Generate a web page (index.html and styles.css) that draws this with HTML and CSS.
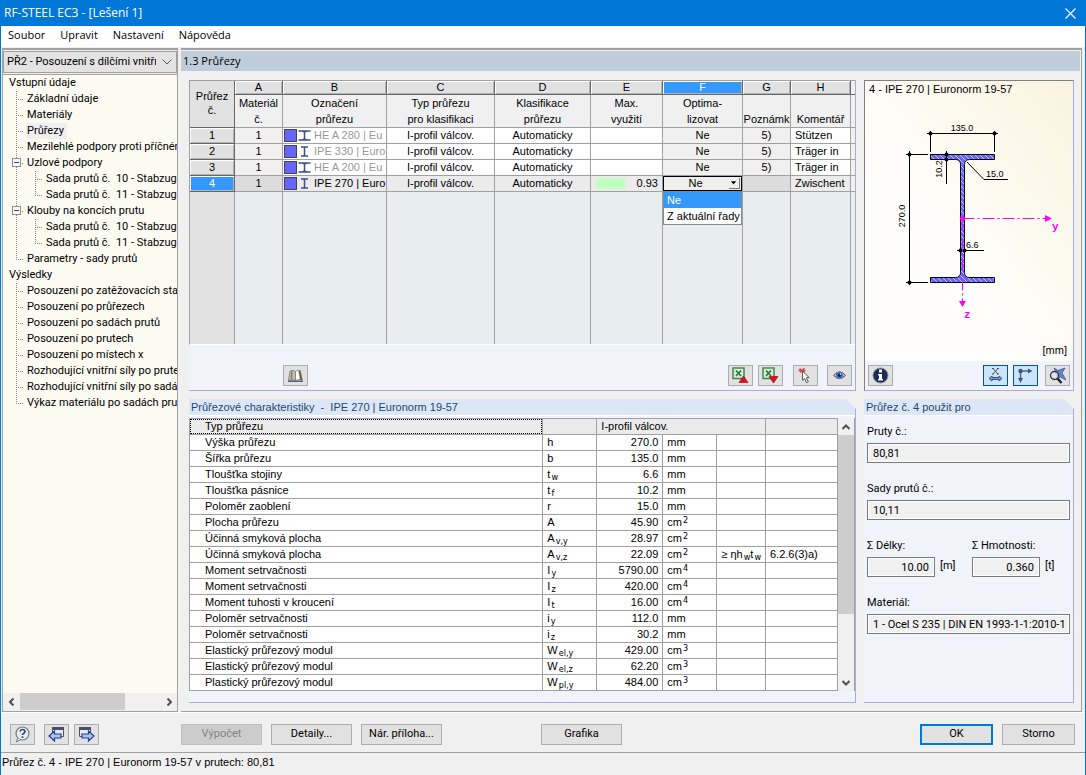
FILE: index.html
```html
<!DOCTYPE html>
<html lang="cs">
<head>
<meta charset="utf-8">
<title>RF-STEEL EC3 - [Lešení 1]</title>
<link rel="stylesheet" href="styles.css">
</head>
<body>
<div class="window">
  <header class="titlebar">
    <h1>RF-STEEL EC3 - [Lešení 1]</h1>
    <button class="close" aria-label="Zavřít"><svg width="11" height="11" viewBox="0 0 11 11"><path d="M.5.5l10 10M10.500.500l-10 10" stroke="#fff" fill="none" stroke-width="1.200"/></svg></button>
  </header>
  <nav class="menu">
    <button>Soubor</button><button>Upravit</button><button>Nastavení</button><button>Nápověda</button>
  </nav>

  <div class="main">
    <aside class="sidebar">
      <select class="case" aria-label="Případ"><option>PŘ2 - Posouzení s dílčími vnitřními silami</option></select>
      <div class="treebox">
        <ul class="tree">
          <li>Vstupní údaje
            <ul>
              <li>Základní údaje</li>
              <li>Materiály</li>
              <li><span class="current">Průřezy</span></li>
              <li>Mezilehlé podpory proti příčnému</li>
              <li><button class="expander" aria-label="Sbalit"></button>Uzlové podpory
                <ul><li>Sada prutů č.&nbsp; 10 - Stabzug</li><li>Sada prutů č.&nbsp; 11 - Stabzug</li></ul></li>
              <li><button class="expander" aria-label="Sbalit"></button>Klouby na koncích prutu
                <ul><li>Sada prutů č.&nbsp; 10 - Stabzug</li><li>Sada prutů č.&nbsp; 11 - Stabzug</li></ul></li>
              <li>Parametry - sady prutů</li>
            </ul></li>
          <li>Výsledky
            <ul>
              <li>Posouzení po zatěžovacích stavech</li>
              <li>Posouzení po průřezech</li>
              <li>Posouzení po sadách prutů</li>
              <li>Posouzení po prutech</li>
              <li>Posouzení po místech x</li>
              <li>Rozhodující vnitřní síly po prutech</li>
              <li>Rozhodující vnitřní síly po sadách</li>
              <li>Výkaz materiálu po sadách prutů</li>
            </ul></li>
        </ul>
        <div class="hscroll">
          <button aria-label="Vlevo"><svg width="8" height="8" viewBox="0 0 8 8"><path d="M5.500.500L2 4l3.500 3.500"/></svg></button>
          <div class="track"><div class="thumb"></div></div>
          <button aria-label="Vpravo"><svg width="8" height="8" viewBox="0 0 8 8"><path d="M2.500.500L6 4 2.500 7.500"/></svg></button>
        </div>
      </div>
    </aside>

    <main class="content">
      <h2 class="page-title">1.3 Průřezy</h2>
      <div class="panels">
        <section class="panel sections">
          <table class="grid">
            <colgroup><col class="c0"><col class="c1"><col class="c2"><col class="c3"><col class="c4"><col class="c5"><col class="c6"><col class="c1"><col class="c8"><col></colgroup>
            <thead>
              <tr class="letters"><th class="corner" rowspan="2">Průřez<br>č.</th><th>A</th><th>B</th><th>C</th><th>D</th><th>E</th><th class="on">F</th><th>G</th><th>H</th><th class="end"></th></tr>
              <tr class="names"><th>Materiál<br>č.</th><th>Označení<br>průřezu</th><th>Typ průřezu<br>pro klasifikaci</th><th>Klasifikace<br>průřezu</th><th>Max.<br>využití</th><th>Optima-<br>lizovat</th><th><br>Poznámk</th><th><br>Komentář</th><th class="end"></th></tr>
            </thead>
            <tbody>
              <tr><th>1</th><td class="ro">1</td><td class="sec dim"><span><i></i><svg width="13" height="11" viewBox="0 0 13 11"><path d="M.5 1h12M.5 10h12M4.500 1.500h4M4.500 9.500h4M6.500 1v9"/></svg>HE A 280 | Eu</span></td><td>I-profil válcov.</td><td>Automaticky</td><td></td><td class="ro">Ne</td><td class="ro">5)</td><td class="left">Stützen</td><td class="end"></td></tr>
              <tr><th>2</th><td class="ro">1</td><td class="sec dim"><span><i></i><svg width="13" height="11" viewBox="0 0 13 11"><path d="M3 1h7M3 10h7M6.500 1v9"/></svg>IPE 330 | Euro</span></td><td>I-profil válcov.</td><td>Automaticky</td><td></td><td class="ro">Ne</td><td class="ro">5)</td><td class="left">Träger in</td><td class="end"></td></tr>
              <tr><th>3</th><td class="ro">1</td><td class="sec dim"><span><i></i><svg width="13" height="11" viewBox="0 0 13 11"><path d="M.5 1h12M.5 10h12M4.500 1.500h4M4.500 9.500h4M6.500 1v9"/></svg>HE A 200 | Eu</span></td><td>I-profil válcov.</td><td>Automaticky</td><td></td><td class="ro">Ne</td><td class="ro">5)</td><td class="left">Träger in</td><td class="end"></td></tr>
              <tr class="sel"><th>4</th><td class="ro">1</td><td class="sec"><span><i></i><svg width="13" height="11" viewBox="0 0 13 11"><path d="M3 1h7M3 10h7M6.500 1v9"/></svg>IPE 270 | Euro</span></td><td>I-profil válcov.</td><td>Automaticky</td>
                <td><span class="usage"><i></i>0.93</span></td>
                <td class="edit"><div class="combo"><select aria-label="Optimalizovat"><option>Ne</option><option>Z aktuální řady</option></select><svg class="drop" width="11" height="11" viewBox="0 0 11 11"><path d="M2 3.500h6L5 7z"/></svg>
                  <ul class="options" role="listbox"><li role="option" aria-selected="true">Ne</li><li role="option">Z aktuální řady</li></ul></div></td>
                <td class="ro"></td><td class="left">Zwischent</td><td class="end"></td></tr>
              <tr class="rest"><th></th><td></td><td></td><td></td><td></td><td></td><td></td><td></td><td></td><td class="end"></td></tr>
            </tbody>
          </table>
          <div class="toolbar grid-tools">
            <button class="icon" aria-label="Knihovna"><svg width="17" height="14" viewBox="0 0 17 14"><path d="M3 2q3-1.500 5.500.5v9Q5 10 1.500 11.500z" fill="#c9c2b2" stroke="#777" stroke-width=".8"/><path d="M8.500 2.500q2-2 4.500-1l2 9.500q-3.500-1-6.500.500z" fill="#fff" stroke="#777" stroke-width=".8"/><path d="M4 2.200l1.500-.4v9H3.500z" fill="#8a8170"/><path d="M11.500 1.500l2 .3 2 9.200h-2.500z" fill="#6b614f"/><path d="M1 11.500h15v1.500H1z" fill="#556080"/></svg></button>
            <button class="icon push" aria-label="Export do Excelu"><svg width="17" height="17" viewBox="0 0 17 17"><rect x="1" y="1" width="11" height="10.500" fill="#dcecdc" stroke="#3f8a4b" stroke-width="1.500"/><path d="M4 3.500l5 5.500M9 3.500L4 9" stroke="#2f7a3d" stroke-width="1.800"/><path d="M11.500 9l4.500 6.500H7z" fill="#e01020" stroke="#900" stroke-width=".6"/></svg></button>
            <button class="icon" aria-label="Import z Excelu"><svg width="17" height="17" viewBox="0 0 17 17"><rect x="1" y="1" width="11" height="10.500" fill="#dcecdc" stroke="#3f8a4b" stroke-width="1.500"/><path d="M4 3.500l5 5.500M9 3.500L4 9" stroke="#2f7a3d" stroke-width="1.800"/><path d="M11.500 16l4.500-6.500H7z" fill="#e01020" stroke="#900" stroke-width=".6"/></svg></button>
            <button class="icon gap-l" aria-label="Vybrat"><svg width="17" height="17" viewBox="0 0 17 17"><path d="M2.500 1.500l5 4M7.500 1L3 5.500M1.500 3.500h7" stroke="#d84050" stroke-width="1.300"/><path d="M5.500 4l6.500 6.500-2.700.300 2 4-1.800.900-1.900-4.100-2 1.800z" fill="#fff" stroke="#555"/></svg></button>
            <button class="icon gap-m" aria-label="Zobrazit"><svg width="15" height="11" viewBox="0 0 15 11"><path d="M1.500 5.500Q7.500-1.500 13.500 5.500 7.500 11.500 1.500 5.500z" fill="#dde6f5" stroke="#444"/><circle cx="7.500" cy="5.300" r="3.700" fill="#4d74c9"/><circle cx="7.500" cy="5.300" r="1.700" fill="#111a40"/><circle cx="8.500" cy="4.300" r=".7" fill="#fff"/></svg></button>
          </div>
        </section>

        <section class="panel preview">
          <svg class="drawing" viewBox="865 81 208 280" role="img" aria-label="IPE 270">
            <defs>
              <linearGradient id="paper" x1="0" y1="1" x2="1" y2="0"><stop offset=".35" stop-color="#fffefc"/><stop offset="1" stop-color="#f9f4df"/></linearGradient>
              <pattern id="hatch" width="5" height="5" patternUnits="userSpaceOnUse"><rect width="5" height="5" fill="#6666ff"/><path d="M-1-1l7 7M-1 4l2 2M4-1l2 2" stroke="#ececff" stroke-width=".7"/></pattern>
            </defs>
            <rect x="865" y="81" width="208" height="280" fill="url(#paper)"/>
            <text x="869" y="93" class="cap">4 - IPE 270 | Euronorm 19-57</text>
            <path d="M930.500 154.500h64v5h-25q-5 0-5 5v108q0 5 5 5h25v5h-64v-5h25q5 0 5-5v-108q0-5-5-5h-25z" fill="url(#hatch)" stroke="#000"/>
            <g stroke="#000" fill="none">
              <path d="M927 133.500h71M930.500 131v21M994.500 131v21M909.500 151v134M906 154.500h22M906 282.500h22M946.500 151v33M957 250.500h27M967 162l17 17.500h24"/>
            </g>
            <g fill="#000"><circle cx="930.500" cy="133.500" r="2"/><circle cx="994.500" cy="133.500" r="2"/><circle cx="909.500" cy="154.500" r="2"/><circle cx="909.500" cy="282.500" r="2"/><circle cx="946.500" cy="154.500" r="2"/><circle cx="946.500" cy="159.500" r="2"/><circle cx="960.500" cy="250.500" r="2"/><circle cx="964.500" cy="250.500" r="2"/></g>
            <g class="dim-text">
              <text x="962" y="131" text-anchor="middle">135.0</text>
              <text x="986" y="177">15.0</text>
              <text x="966" y="248">6.6</text>
              <text transform="translate(905 216) rotate(-90)" text-anchor="middle">270.0</text>
              <text transform="translate(942 169) rotate(-90)" text-anchor="middle">10.2</text>
            </g>
            <g stroke="#f0f" fill="none" stroke-dasharray="12 3 2 3"><path d="M962.500 218.500h83M962.500 218.500v84"/></g>
            <path d="M1045 215l7 3.500-7 3.500zM959 301h7l-3.500 6z" fill="#f0f"/><circle cx="962.500" cy="218.500" r="2.500" fill="#f0f"/>
            <g class="axis"><text x="1052" y="230">y</text><text x="964" y="318">z</text></g>
            <text x="1067" y="354" text-anchor="end" class="cap">[mm]</text>
          </svg>
          <div class="toolbar">
            <button class="icon" aria-label="Informace"><svg width="17" height="17" viewBox="0 0 17 17"><circle cx="8.500" cy="8.500" r="7.500" fill="#1d2a52" stroke="#8890a8"/><path d="M7 2.500h3v3H7zM6 7h4v5h1v1.500H6V12h1V8.500H6z" fill="#fff"/></svg></button>
            <button class="icon on push" aria-label="Kóty"><svg width="17" height="17" viewBox="0 0 17 17"><path d="M6 1.500l5 5.500M11 1.500L6 7M5 1.500h2M10 1.500h2M5 7h2M10 7h2" stroke="#444" stroke-width=".9" fill="none"/><path d="M2 11.500l3-2.500v1.500h7V9l3 2.500-3 2.500v-1.500H5V14z" fill="#7d9bd0" stroke="#2a4478" stroke-width=".9"/></svg></button>
            <button class="icon on" aria-label="Osy"><svg width="17" height="17" viewBox="0 0 17 17"><path d="M2 4h10M3.500 2v10" stroke="#4a6498" stroke-width="1.500"/><path d="M11 1.500L15.500 4 11 6.500zM1 11h5l-2.500 5z" fill="#3a5488"/><circle cx="3.500" cy="4" r="2.200" fill="#3a5488"/></svg></button>
            <button class="icon gap-s" aria-label="Zobrazit vše"><svg width="17" height="17" viewBox="0 0 17 17"><path d="M5 1l4 2.500L16 1l-3 5 4 7-6-3-4 3 1-6z" fill="#5f86cf" stroke="#2b4a90" stroke-width=".7"/><circle cx="5.500" cy="8.500" r="4" fill="#dfe6f0" fill-opacity=".8" stroke="#333" stroke-width="1.300"/><path d="M8.500 11.500l4 4.500" stroke="#222" stroke-width="2.500"/></svg></button>
          </div>
        </section>

        <section class="panel props">
          <h3>Průřezové charakteristiky &nbsp;-&nbsp; IPE 270 | Euronorm 19-57</h3>
          <div class="props-body">
            <table class="values">
              <colgroup><col><col class="v1"><col class="v2"><col class="v3"><col class="v4"><col class="v5"></colgroup>
              <tbody>
                <tr class="head"><td><div class="focus">Typ průřezu</div></td><td></td><td colspan="3" class="type">I-profil válcov.</td><td></td></tr>
                <tr><td>Výška průřezu</td><td>h</td><td>270.0</td><td>mm</td><td></td><td></td></tr>
                <tr><td>Šířka průřezu</td><td>b</td><td>135.0</td><td>mm</td><td></td><td></td></tr>
                <tr><td>Tloušťka stojiny</td><td>t<sub>w</sub></td><td>6.6</td><td>mm</td><td></td><td></td></tr>
                <tr><td>Tloušťka pásnice</td><td>t<sub>f</sub></td><td>10.2</td><td>mm</td><td></td><td></td></tr>
                <tr><td>Poloměr zaoblení</td><td>r</td><td>15.0</td><td>mm</td><td></td><td></td></tr>
                <tr><td>Plocha průřezu</td><td>A</td><td>45.90</td><td>cm<sup>2</sup></td><td></td><td></td></tr>
                <tr><td>Účinná smyková plocha</td><td>A<sub>v,y</sub></td><td>28.97</td><td>cm<sup>2</sup></td><td></td><td></td></tr>
                <tr><td>Účinná smyková plocha</td><td>A<sub>v,z</sub></td><td>22.09</td><td>cm<sup>2</sup></td><td>≥ ηh<sub>w</sub>t<sub>w</sub></td><td>6.2.6(3)a)</td></tr>
                <tr><td>Moment setrvačnosti</td><td>I<sub>y</sub></td><td>5790.00</td><td>cm<sup>4</sup></td><td></td><td></td></tr>
                <tr><td>Moment setrvačnosti</td><td>I<sub>z</sub></td><td>420.00</td><td>cm<sup>4</sup></td><td></td><td></td></tr>
                <tr><td>Moment tuhosti v kroucení</td><td>I<sub>t</sub></td><td>16.00</td><td>cm<sup>4</sup></td><td></td><td></td></tr>
                <tr><td>Poloměr setrvačnosti</td><td>i<sub>y</sub></td><td>112.0</td><td>mm</td><td></td><td></td></tr>
                <tr><td>Poloměr setrvačnosti</td><td>i<sub>z</sub></td><td>30.2</td><td>mm</td><td></td><td></td></tr>
                <tr><td>Elastický průřezový modul</td><td>W<sub>el,y</sub></td><td>429.00</td><td>cm<sup>3</sup></td><td></td><td></td></tr>
                <tr><td>Elastický průřezový modul</td><td>W<sub>el,z</sub></td><td>62.20</td><td>cm<sup>3</sup></td><td></td><td></td></tr>
                <tr><td>Plastický průřezový modul</td><td>W<sub>pl,y</sub></td><td>484.00</td><td>cm<sup>3</sup></td><td></td><td></td></tr>
              </tbody>
            </table>
            <div class="vscroll">
              <button aria-label="Nahoru"><svg width="8" height="8" viewBox="0 0 8 8"><path d="M.5 6L4 2.500 7.500 6"/></svg></button>
              <div class="track"><div class="thumb"></div></div>
              <button aria-label="Dolů"><svg width="8" height="8" viewBox="0 0 8 8"><path d="M.5 2L4 5.500 7.500 2"/></svg></button>
            </div>
          </div>
        </section>

        <section class="panel usedfor">
          <h3>Průřez č. 4 použit pro</h3>
          <form class="fields">
            <div class="field wide"><label for="pruty">Pruty č.:</label><input id="pruty" readonly value="80,81"></div>
            <div class="field wide"><label for="sady">Sady prutů č.:</label><input id="sady" readonly value="10,11"></div>
            <div class="field num"><label for="delky">Σ Délky:</label><div><input id="delky" readonly value="10.00"><span>[m]</span></div></div>
            <div class="field num"><label for="hmot">Σ Hmotnosti:</label><div><input id="hmot" readonly value="0.360"><span>[t]</span></div></div>
            <div class="field wide"><label for="mat">Materiál:</label><input id="mat" readonly value="1 - Ocel S 235 | DIN EN 1993-1-1:2010-12"></div>
          </form>
        </section>
      </div>
    </main>
  </div>

  <footer class="actions">
    <button class="icon" aria-label="Nápověda"><svg width="17" height="17" viewBox="0 0 17 17"><circle cx="8.500" cy="7.500" r="6.500" fill="#e6ebf5" stroke="#777" stroke-width="1.200"/><path d="M4 12l-2 4 5-2.500" fill="#e6ebf5" stroke="#777"/><path d="M6 5.500q.500-2 2.500-2t2.500 1.800q0 1.400-1.500 2.200-1 .500-1 1.500M8.500 10.300v1.700" stroke="#33497f" stroke-width="1.700" fill="none"/></svg></button>
    <button class="icon gap-m" aria-label="Předchozí"><svg width="17" height="17" viewBox="0 0 17 17"><path d="M4.500 1.500h11v9h-11z" fill="#e8e8ee" stroke="#555"/><path d="M4 1h12v3H4z" fill="#44506e"/><path d="M1 10l5.500-5v3H13v4H6.500v3z" fill="#a9c4f0" stroke="#1d3f94" stroke-width="1.200"/></svg></button>
    <button class="icon" aria-label="Další"><svg width="17" height="17" viewBox="0 0 17 17"><path d="M1.500 1.500h11v9h-11z" fill="#e8e8ee" stroke="#555"/><path d="M1 1h12v3H1z" fill="#44506e"/><path d="M16 10l-5.500-5v3H4v4h6.500v3z" fill="#a9c4f0" stroke="#1d3f94" stroke-width="1.200"/></svg></button>
    <div class="group calc"><button class="btn" disabled>Výpočet</button><button class="btn">Detaily...</button><button class="btn">Nár. příloha...</button></div>
    <button class="btn graphics">Grafika</button>
    <div class="group confirm"><button class="btn primary">OK</button><button class="btn">Storno</button></div>
  </footer>
  <div class="status">Průřez č. 4 - IPE 270 | Euronorm 19-57 v prutech: 80,81</div>
</div>
</body>
</html>
```
FILE: styles.css
```css
:root {
  --ui: Roboto, "Noto Sans", sans-serif;
  --system: "Open Sans", "Noto Sans", sans-serif;
  --grid: "Liberation Sans", Arial, sans-serif;
  --line: #a0a0a0;
  --panel: #f0f4fa;
  --panel-line: #a8a8ea;
}
* { box-sizing: border-box; }
body { margin: 0; background: #f0f0f0; color: #000; font: 11px/16px var(--ui); }
button, input, select { font: inherit; color: inherit; margin: 0; padding: 0; border: 0; border-radius: 0; }
ul { list-style: none; margin: 0; padding: 0; }
h1, h2, h3 { margin: 0; font-weight: normal; }
svg { display: block; flex: none; }
button { display: flex; align-items: center; justify-content: center; }

.window { display: flex; flex-direction: column; min-height: 100vh; border: 1px solid #0078d7; border-top: 0; }
.titlebar { display: flex; align-items: center; justify-content: space-between; height: 26px; padding: 0 9px 0 3px; background: #0078d7; color: #fff; }
.titlebar h1 { font: 12px/26px var(--system); }
.close { background: none; }
.menu { display: flex; gap: 15px; height: 21px; padding: 0 7px; background: #fff; font: 11px/18px var(--system); }
.menu button { height: 18px; background: none; }

.main { display: flex; flex: 1; gap: 3px; padding-top: 1px; }
.sidebar { display: flex; flex-direction: column; flex: none; width: 176px; margin-left: 1px; border: 1px solid var(--line); border-top-width: 2px; }
.case { appearance: none; height: 22px; margin: 1px 0 1px; padding: 0 20px 0 3px; border: 1px solid var(--line); background: #e3e3e3 url("data:image/svg+xml,%3Csvg xmlns='http://www.w3.org/2000/svg' width='10' height='6'%3E%3Cpath d='M.5.5L5 5 9.500.5' fill='none' stroke='%23555'/%3E%3C/svg%3E") no-repeat right 4px center; text-overflow: clip; }
.treebox { display: flex; flex-direction: column; flex: 1; border-top: 1px solid var(--line); background: #fcfbf2; }
.tree { flex: 1; overflow: hidden; padding: 0 0 0 6px; white-space: nowrap; }
.tree ul { margin-left: 6px; }
.tree ul ul { margin-left: 7px; }
.tree ul li {
  padding-left: 12px;
  background-image: repeating-linear-gradient(to bottom, #888 0 1px, transparent 1px 2px), repeating-linear-gradient(to right, #888 0 1px, transparent 1px 2px);
  background-size: 1px 100%, 8px 1px;
  background-position: 1px 0, 1px 8px;
  background-repeat: no-repeat;
}
.tree ul li:last-child { background-size: 1px 8px, 8px 1px; }
.current { display: inline-block; margin-left: -1px; padding: 0 3px 0 1px; background: #efefef; }
.expander { display: inline-block; width: 9px; height: 9px; margin: 0 6px 0 -15px; border: 1px solid #909090; background: linear-gradient(#2a4a9a, #2a4a9a) center / 5px 1px no-repeat, #f6f6f6; }
.hscroll { display: flex; height: 18px; padding-bottom: 1px; background: #f0f0f0; }
.hscroll button, .vscroll button { flex: none; width: 17px; height: 17px; background: #f0f0f0; }
.hscroll path, .vscroll path { fill: none; stroke: #505050; stroke-width: 2; }
.track { flex: 1; min-height: 0; }
.hscroll .thumb { width: 75%; height: 100%; background: #cdcdcd; }

.content { flex: 1; min-width: 0; margin-right: 3px; padding: 1px 1px 8px 0; border: 1px solid var(--line); border-width: 2px 1px 1px 0; }
.page-title { height: 20px; padding-left: 2px; background: #bfcddb; font: 11px/20px var(--system); }
.panels { display: grid; grid-template-columns: minmax(0, 1fr) 210px; gap: 8px 8px; padding: 9px 6px 0 8px; }
.panel { display: flex; flex-direction: column; min-width: 0; border: 1px solid var(--panel-line); border-width: 0 1px 1px 0; background: var(--panel); }
.panel h3 { height: 17px; padding-left: 2px; border-bottom: 1px solid #fff; background: #dce6f4; color: #1d4673; font: 11px/16px var(--grid); }
.props, .usedfor { clip-path: polygon(0 0, calc(100% - 10px) 0, 100% 10px, 100% 100%, 0 100%); }

.grid { width: 100%; border-spacing: 0; table-layout: fixed; border-top: 1px solid var(--line); border-left: 1px solid var(--line); border-bottom: 1px solid #fff; font: 11px/15px var(--grid); }
.c0 { width: 45px; } .c1 { width: 48px; } .c2 { width: 104px; } .c3 { width: 108px; } .c4 { width: 96px; } .c5 { width: 72px; } .c6 { width: 80px; } .c8 { width: 60px; }
.grid th, .grid td { height: 16px; padding: 0; border: 1px solid var(--line); border-width: 0 1px 1px 0; background: #fff; font-weight: normal; text-align: center; white-space: nowrap; }
.letters th { height: 14px; line-height: 13px; }
.grid .letters th:not(.corner), .grid tbody th { border-color: #666; background: #e1e1e1; box-shadow: inset 1px 1px #fff, inset -1px -1px #b4b4b4; }
.grid .letters th.on, .grid .sel th { background: #3399ff; color: #fff; }
.grid th.corner { padding-bottom: 2px; border-color: #666; background: #e1e1e1; line-height: 14px; }
.grid .names th { height: 33px; overflow: hidden; background: #f0f0f0; line-height: 16px; }
.grid td.ro { background: #f0f0f0; }
.grid .sel td { background: #ebebeb; }
.grid .sel td.ro { background: #dcdcdc; }
.grid td.left { padding-left: 4px; text-align: left; }
.grid tr > .end, .grid .letters th.end { border-right: 0; background: #f0f0f0; box-shadow: none; }
.sec span { display: flex; align-items: center; gap: 3px; height: 15px; padding-left: 1px; overflow: hidden; }
.sec i { flex: none; width: 13px; height: 13px; margin-right: -2px; border: 1px solid #444; background: #6666ff; }
.sec path { fill: none; stroke: #3d4f86; stroke-width: 1.500; }
.dim { color: #999; }
.usage { display: flex; align-items: center; justify-content: space-between; padding: 0 4px 0 5px; }
.usage i { width: 29px; height: 11px; background: #c0ffc0; }
.grid tbody .rest th, .grid .rest td { height: 152px; border-bottom: 0; background: #e8eeee; }
.grid tbody .rest th { border-color: var(--line); background: #e1e1e1; box-shadow: none; }
.combo { position: relative; display: flex; height: 15px; border: 1px solid #000; }
.combo select { appearance: none; flex: 1; width: 100%; padding-right: 14px; background: #efefef; line-height: 13px; text-align-last: center; }
.drop { position: absolute; top: 1px; right: 1px; background: #eee; border-right: 1px solid #777; border-bottom: 1px solid #777; }
.options { position: absolute; z-index: 2; top: 14px; left: -1px; right: -1px; border: 1px solid #888; background: #fff; line-height: 16px; text-align: left; }
.options li { padding-left: 3px; }
.options [aria-selected] { background: #3399ff; color: #fff; }

.toolbar { display: flex; gap: 5px; padding: 4px 3px; }
.grid-tools { padding: 20px 3px 4px 94px; }
.icon { flex: none; width: 25px; height: 21px; border: 1px solid #adadad; background: #e1e1e1; }
.icon.on { border-color: #005499; background: #cce4f7; }
.push { margin-left: auto; }
.gap-s { margin-left: 2px; }
.gap-m { margin-left: 4px; }
.gap-l { margin-left: 5px; }

.preview { border-top: 1px solid #808080; border-left: 1px solid #808080; }
.drawing { width: 100%; height: auto; }
.cap { font: 11px var(--grid); }
.dim-text { font: 9px var(--grid); }
.axis { font: bold 11px "Liberation Mono", monospace; fill: #f0f; }

.props-body { display: flex; margin-top: 2px; margin-bottom: 11px; }
.values { flex: 1; min-width: 0; border-spacing: 0; table-layout: fixed; border-top: 1px solid var(--line); border-left: 1px solid var(--line); font: 11px/15px var(--grid); }
.v1 { width: 54px; } .v2 { width: 66px; } .v3 { width: 54px; } .v4 { width: 48px; } .v5 { width: 72px; }
.values td { height: 16px; padding: 0 4px; border: 1px solid var(--line); border-width: 0 1px 1px 0; background: #fff; white-space: nowrap; }
.values td:first-child { padding-left: 15px; }
.values td:nth-child(3) { text-align: right; }
.values .head td { background: #ebebeb; }
.values .head td:first-child { padding: 0; }
.values .head td.type { text-align: left; }
.focus { height: 15px; padding-left: 14px; border: 1px dotted #000; line-height: 13px; }
sub, sup { font: 9px/9px "DejaVu Sans Condensed", sans-serif; vertical-align: baseline; position: relative; margin-left: 1px; }
sub { top: 2px; }
sup { top: -3px; }
.vscroll { display: flex; flex-direction: column; width: 17px; border-right: 1px solid var(--line); background: #f0f0f0; }
.vscroll button { width: 16px; }
.vscroll .thumb { height: 75%; background: #cdcdcd; }

.fields { display: flex; flex-wrap: wrap; column-gap: 37px; row-gap: 17px; padding: 7px 3px; }
.field { display: flex; flex-direction: column; }
.field label { height: 20px; line-height: 18px; }
.field input { height: 20px; padding: 0 5px; border: 1px solid #7a7a7a; outline: 1px solid #fff; outline-offset: -2px; background: #f0f0f0; }
.wide { width: 100%; }
.num { width: 68px; white-space: nowrap; }
.num div { display: flex; gap: 5px; line-height: 18px; }
.num input { width: 68px; flex: none; text-align: right; }

.actions { display: flex; gap: 5px; align-items: center; height: 40px; padding: 3px 10px 0 9px; border-top: 1px solid #fff; }
.group { display: flex; gap: 9px; }
.btn { width: 81px; height: 21px; border: 1px solid #adadad; background: #e1e1e1; white-space: nowrap; }
.btn:disabled { border-color: #bfbfbf; background: #ccc; color: #838383; }
.calc { margin-left: 77px; }
.graphics { margin-left: 94px; }
.confirm { margin-left: auto; }
.confirm .btn { width: 73px; }
.btn.primary { border: 2px solid #0078d7; }
.status { height: 23px; padding-left: 1px; border-top: 1px solid var(--line); font: 11px/19px var(--grid); }
```
